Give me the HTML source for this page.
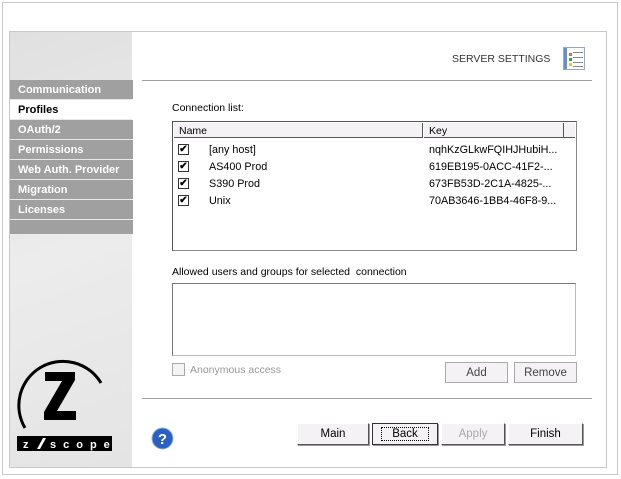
<!DOCTYPE html>
<html><head><style>
*{margin:0;padding:0;box-sizing:border-box}
body{width:621px;height:479px;background:#fff;font-family:"Liberation Sans",Tahoma,sans-serif;font-size:10.5px;color:#000;position:relative;overflow:hidden}
.a{position:absolute}
.nav{position:absolute;left:10px;width:123px;height:19px;background:#a0a0a0;color:#fff;font-weight:bold;font-size:11px;padding:4px 0 0 8px}
.btn{position:absolute;height:22px;background:#f4f2f4;border:1px solid #fff;border-right-color:#555;border-bottom-color:#555;box-shadow:1px 1px 0 #999;text-align:center;font-size:11.5px;line-height:20px}
.cb{position:absolute;left:178px;width:11px;height:11px;border:1px solid #333;background:#fff;font-size:10px;line-height:9px;text-align:center;font-weight:bold}
.row{position:absolute;font-size:10.8px}
</style></head><body>
<div class="a" style="left:2px;top:2px;width:616px;height:473px;border:1px solid #c8c8c8"></div>
<div class="a" style="left:9px;top:31px;width:598px;height:437px;border:1px solid #c8c8c8"></div>
<div class="a" style="left:10px;top:32px;width:122px;height:435px;background:linear-gradient(160deg,#e0e0e0,#ececec 50%,#e4e4e4)"></div>
<div class="nav" style="top:80px">Communication</div>
<div class="nav" style="top:100px;background:#fff;color:#000">Profiles</div>
<div class="nav" style="top:120px">OAuth/2</div>
<div class="nav" style="top:140px">Permissions</div>
<div class="nav" style="top:160px">Web Auth. Provider</div>
<div class="nav" style="top:180px">Migration</div>
<div class="nav" style="top:200px">Licenses</div>
<div class="nav" style="top:220px;height:14px"></div>
<svg class="a" style="left:15px;top:350px" width="100" height="105">
<path d="M10 78 A44 44 0 0 1 86 33" stroke="#000" stroke-width="3" fill="none"/>
<path d="M30 22 H60 V30 L42 61 H61 V70 H29 V62 L47 31 H30 Z" fill="#000"/>
<rect x="2" y="86" width="95" height="15" fill="#000"/>
<path d="M22 99 L28 88 H31 L25 99Z" fill="#fff"/>
<text x="8" y="98" font-family="Liberation Sans" font-weight="bold" font-size="11" fill="#fff">z</text>
<text x="35" y="98" font-family="Liberation Sans" font-weight="bold" font-size="11" fill="#fff" letter-spacing="7">scope</text>
</svg>
<div class="a" style="left:452px;top:53px;font-size:10.5px;color:#333">SERVER SETTINGS</div>
<div class="a" style="left:563px;top:47px;width:22px;height:23px;border:1px solid #9ab;background:#fff"></div>
<div class="a" style="left:564px;top:48px;width:3px;height:21px;background:#6a8fc8"></div>
<div class="a" style="left:569px;top:53px;width:3px;height:3px;background:#e63"></div>
<div class="a" style="left:569px;top:58px;width:3px;height:3px;background:#3a3"></div>
<div class="a" style="left:569px;top:63px;width:3px;height:3px;background:#ec0"></div>
<div class="a" style="left:573px;top:52px;width:10px;height:15px;border-top:1px solid #888;border-bottom:1px solid #888;background:linear-gradient(#fff 4px,#888 4px,#888 5px,#fff 5px,#fff 9px,#888 9px,#888 10px,#fff 10px)"></div>
<div class="a" style="left:142px;top:80px;width:450px;height:1px;background:#a0a0a0"></div>
<div class="a" style="left:172px;top:102px">Connection list:</div>
<div class="a" style="left:172px;top:121px;width:405px;height:130px;border:1px solid #888;border-top-color:#555;border-left-color:#555;background:#fff"></div>
<div class="a" style="left:174px;top:123px;width:390px;height:15px;background:#f4f2f4;border-bottom:1px solid #555"></div>
<div class="a" style="left:422px;top:123px;width:2px;height:15px;border-left:1px solid #555;border-right:1px solid #fff"></div>
<div class="a" style="left:563px;top:123px;width:12px;height:15px;background:#f4f2f4;border-left:1px solid #555;border-bottom:1px solid #555"></div>
<div class="a" style="left:179px;top:125px">Name</div>
<div class="a" style="left:429px;top:125px">Key</div>
<div class="cb" style="top:144px">✔</div><div class="row" style="left:209px;top:144px">[any host]</div><div class="row" style="left:429px;top:144px">nqhKzGLkwFQIHJHubiH...</div>
<div class="cb" style="top:161px">✔</div><div class="row" style="left:209px;top:161px">AS400 Prod</div><div class="row" style="left:429px;top:161px">619EB195-0ACC-41F2-...</div>
<div class="cb" style="top:178px">✔</div><div class="row" style="left:209px;top:178px">S390 Prod</div><div class="row" style="left:429px;top:178px">673FB53D-2C1A-4825-...</div>
<div class="cb" style="top:195px">✔</div><div class="row" style="left:209px;top:195px">Unix</div><div class="row" style="left:429px;top:195px">70AB3646-1BB4-46F8-9...</div>
<div class="a" style="left:172px;top:266px">Allowed users and groups for selected&nbsp; connection</div>
<div class="a" style="left:172px;top:283px;width:404px;height:73px;border:1px solid #bbb;border-top-color:#777;border-left-color:#777"></div>
<div class="a" style="left:172px;top:363px;width:13px;height:13px;border:1px solid #aaa;background:#f4f4f4"></div>
<div class="a" style="left:190px;top:364px;color:#999">Anonymous access</div>
<div class="btn" style="left:445px;top:362px;width:63px;height:21px;border:1px solid #aaa;box-shadow:none;color:#444">Add</div>
<div class="btn" style="left:514px;top:362px;width:63px;height:21px;border:1px solid #aaa;box-shadow:none;color:#444">Remove</div>
<div class="a" style="left:142px;top:398px;width:450px;height:1px;background:#a0a0a0"></div>
<svg class="a" style="left:151px;top:427px" width="23" height="23"><circle cx="11.5" cy="11.5" r="10.5" fill="#2a5fc8" stroke="#9bb" stroke-width="1"/><text x="11.5" y="17" text-anchor="middle" font-family="Liberation Sans" font-weight="bold" font-size="15" fill="#fff">?</text></svg>
<div class="btn" style="left:297px;top:423px;width:72px">Main</div>
<div class="btn" style="left:372px;top:423px;width:66px;border:1px solid #333"><span style="border:1px dotted #000;padding:0 10px">Back</span></div>
<div class="btn" style="left:441px;top:423px;width:64px;color:#aaa">Apply</div>
<div class="btn" style="left:508px;top:423px;width:75px">Finish</div>
</body></html>
